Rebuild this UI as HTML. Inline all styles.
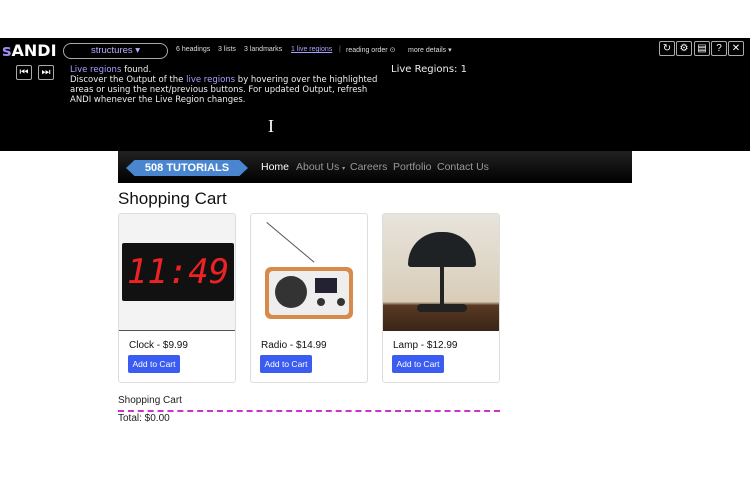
<!DOCTYPE html>
<html><head><style>
*{box-sizing:border-box;margin:0;padding:0}
body{width:750px;height:500px;background:#fff;position:relative;font-family:"Liberation Sans",sans-serif;overflow:hidden}
.a{position:absolute}
#bar{left:0;top:38px;width:750px;height:113px;background:#000;color:#fff}
.t{font-size:7px;color:#ddd}
.btn{position:absolute;width:16px;height:15px;border:1px solid #aaa;border-radius:2px;color:#fff;font-size:10px;text-align:center;line-height:13px}
.card{position:absolute;top:213px;width:118px;height:170px;border:1px solid #ddd;border-radius:3px;overflow:hidden;background:#fff}
.img{position:absolute;left:0;top:0;width:118px;height:117px}
.lbl{position:absolute;left:10px;top:126px;font-size:10px;color:#111}
.add{position:absolute;left:9px;top:141px;width:52px;height:18px;background:#3b5cf0;color:#fff;font-size:8.5px;border-radius:2px;text-align:center;line-height:18px}
</style></head><body>
<div id="bar" class="a">
 <div class="a" style="left:2px;top:3px;font-size:16px;font-weight:bold;font-family:'DejaVu Sans',sans-serif"><span style="color:#9b8cf5">s</span>ANDI</div>
 <div class="a" style="left:63px;top:5px;width:105px;height:16px;border:1px solid #aaa;border-radius:8px;color:#b8b0ff;font-size:9.5px;text-align:center;line-height:14px">structures ▾</div>
 <div class="a t" style="left:176px;top:8px">6 headings</div>
 <div class="a t" style="left:218px;top:8px">3 lists</div>
 <div class="a t" style="left:244px;top:8px">3 landmarks</div>
 <div class="a t" style="left:291px;top:8px;color:#a8a0ff;text-decoration:underline">1 live regions</div>
 <div class="a t" style="left:339px;top:8px;color:#777">|</div>
 <div class="a t" style="left:346px;top:8px">reading order ⊙</div>
 <div class="a t" style="left:408px;top:8px">more details ▾</div>
 <div class="btn" style="left:16px;top:27px">⏮</div>
 <div class="btn" style="left:38px;top:27px">⏭</div>
 <div class="a" style="left:70px;top:27px;font-size:8.5px;line-height:10px;color:#eee;font-family:'DejaVu Sans',sans-serif;width:320px"><span style="color:#a8a0ff">Live regions</span> found.<br>Discover the Output of the <span style="color:#a8a0ff">live regions</span> by hovering over the highlighted areas or using the next/previous buttons. For updated Output, refresh ANDI whenever the Live Region changes.</div>
 <div class="a" style="left:391px;top:26px;font-size:10px;color:#eee;font-family:'DejaVu Sans',sans-serif">Live Regions: 1</div>
 <div class="btn" style="left:659px;top:3px">↻</div>
 <div class="btn" style="left:676px;top:3px">⚙</div>
 <div class="btn" style="left:694px;top:3px">▤</div>
 <div class="btn" style="left:711px;top:3px">?</div>
 <div class="btn" style="left:728px;top:3px">✕</div>
 <div class="a" style="left:268px;top:78px;color:#fff;font-size:18px;font-family:'Liberation Serif',serif">I</div>
</div>
<div class="a" style="left:118px;top:151px;width:514px;height:32px;background:linear-gradient(#222,#000)"></div>
<div class="a" style="left:126px;top:160px;width:122px;height:16px;background:#4a86d0;clip-path:polygon(7% 0,93% 0,100% 50%,93% 100%,7% 100%,0 50%);color:#fff;font-weight:bold;font-size:11px;text-align:center;line-height:16px">508 TUTORIALS</div>
<div class="a" style="left:261px;top:161px;font-size:10.5px;color:#fff">Home</div>
<div class="a" style="left:296px;top:161px;font-size:10.5px;color:#999">About Us <span style="font-size:6px">▾</span></div>
<div class="a" style="left:350px;top:161px;font-size:10.5px;color:#999">Careers</div>
<div class="a" style="left:393px;top:161px;font-size:10.5px;color:#999">Portfolio</div>
<div class="a" style="left:437px;top:161px;font-size:10.5px;color:#999">Contact Us</div>
<div class="a" style="left:118px;top:189px;font-size:17px;color:#111">Shopping Cart</div>
<div class="card" style="left:118px"><div class="img" style="background:#f3f3f3;border-bottom:1px solid #555">
 <div class="a" style="left:3px;top:29px;width:112px;height:58px;background:#111;border-radius:2px;color:#e22;font-size:34px;text-align:center;line-height:58px;font-family:'DejaVu Sans Mono',monospace;font-style:italic">11:49</div></div>
 <div class="lbl">Clock - $9.99</div><div class="add">Add to Cart</div></div>
<div class="card" style="left:250px"><div class="img" style="background:#fff">
 <div class="a" style="left:14px;top:53px;width:88px;height:52px;background:#d88a4a;border-radius:6px"></div>
 <div class="a" style="left:18px;top:57px;width:80px;height:44px;background:#eee;border-radius:4px"></div>
 <div class="a" style="left:24px;top:62px;width:32px;height:32px;background:#333;border-radius:50%"></div>
 <div class="a" style="left:64px;top:64px;width:22px;height:15px;background:#223"></div>
 <div class="a" style="left:66px;top:84px;width:8px;height:8px;background:#333;border-radius:50%"></div>
 <div class="a" style="left:86px;top:84px;width:8px;height:8px;background:#333;border-radius:50%"></div>
 <div class="a" style="left:16px;top:8px;width:62px;height:1px;background:#555;transform:rotate(40deg);transform-origin:0 0"></div></div>
 <div class="lbl">Radio - $14.99</div><div class="add">Add to Cart</div></div>
<div class="card" style="left:382px"><div class="img" style="background:linear-gradient(#e8e4dc,#d8cdb8 75%,#5a3a24 78%,#3a2418)">
 <div class="a" style="left:25px;top:18px;width:68px;height:35px;background:#1e2224;border-radius:34px 34px 3px 3px"></div>
 <div class="a" style="left:57px;top:52px;width:4px;height:40px;background:#222"></div>
 <div class="a" style="left:34px;top:90px;width:50px;height:8px;background:#222;border-radius:4px"></div></div>
 <div class="lbl">Lamp - $12.99</div><div class="add">Add to Cart</div></div>
<div class="a" style="left:118px;top:395px;font-size:10px;color:#222">Shopping Cart</div>
<div class="a" style="left:118px;top:410px;width:382px;border-top:2px dashed #c3c"></div>
<div class="a" style="left:118px;top:413px;font-size:10px;color:#222">Total: $0.00</div>
</body></html>
